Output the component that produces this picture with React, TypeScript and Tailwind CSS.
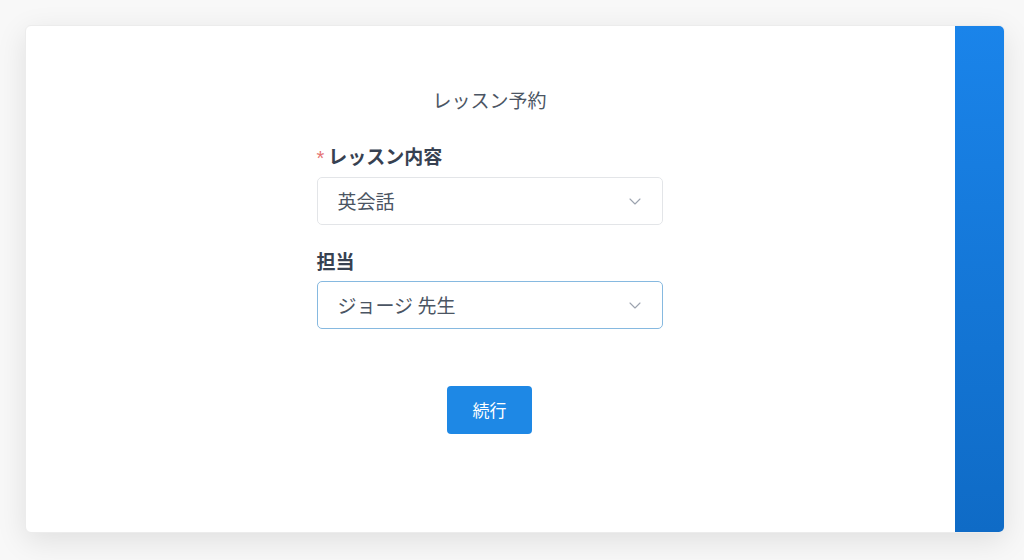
import React from "react";

function Chevron() {
  return (
    <svg width="12" height="7" viewBox="0 0 12 7" fill="none" className="shrink-0">
      <path d="M1 1l5 5 5-5" stroke="#9ca3af" strokeWidth="1.1" strokeLinecap="round" strokeLinejoin="round" />
    </svg>
  );
}

export default function App() {
  const font = { fontFamily: '"Noto Sans CJK JP", "Noto Sans", sans-serif' };
  return (
    <div className="w-[1024px] h-[560px] bg-[#f8f8f8] pt-[25px] pl-[25px]" style={font}>
      <div className="w-[980px] h-[508px] flex rounded-[6px] bg-white shadow-[0_8px_30px_rgba(0,0,0,0.10)] border border-[#ececec] overflow-hidden">
        <div className="flex-1 flex flex-col items-center pt-[62px] pr-[2px]">
          <div className="text-[19px] leading-[24px] text-[#4b5563]">レッスン予約</div>
          <div className="w-[346px] mt-[32px] flex flex-col">
            <div className="flex items-center h-[24px]">
              <span className="text-[#e57373] text-[20px] leading-[20px] mr-[4px] mt-[4px]" style={{ fontFamily: '"Liberation Sans", sans-serif' }}>*</span>
              <span className="text-[19px] font-bold text-[#374151]">レッスン内容</span>
            </div>
            <div className="mt-[9px] h-[48px] rounded-[5px] border border-[#e3e5e8] flex items-center justify-between pl-[20px] pr-[21px]">
              <span className="text-[19px] text-[#4b5563]">英会話</span>
              <Chevron />
            </div>
            <div className="mt-[24px] h-[24px] flex items-center">
              <span className="text-[19px] font-bold text-[#374151]">担当</span>
            </div>
            <div className="mt-[8px] h-[48px] rounded-[5px] border border-[#86b9e0] flex items-center justify-between pl-[20px] pr-[21px]">
              <span className="text-[19px] text-[#4b5563]">ジョージ 先生</span>
              <Chevron />
            </div>
          </div>
          <button className="mt-[57px] w-[85px] h-[48px] rounded-[4px] bg-[#1e88e5] text-white text-[17px]">続行</button>
        </div>
        <div className="w-[49px] bg-gradient-to-b from-[#1a84ea] to-[#0f6bc6]" />
      </div>
    </div>
  );
}
